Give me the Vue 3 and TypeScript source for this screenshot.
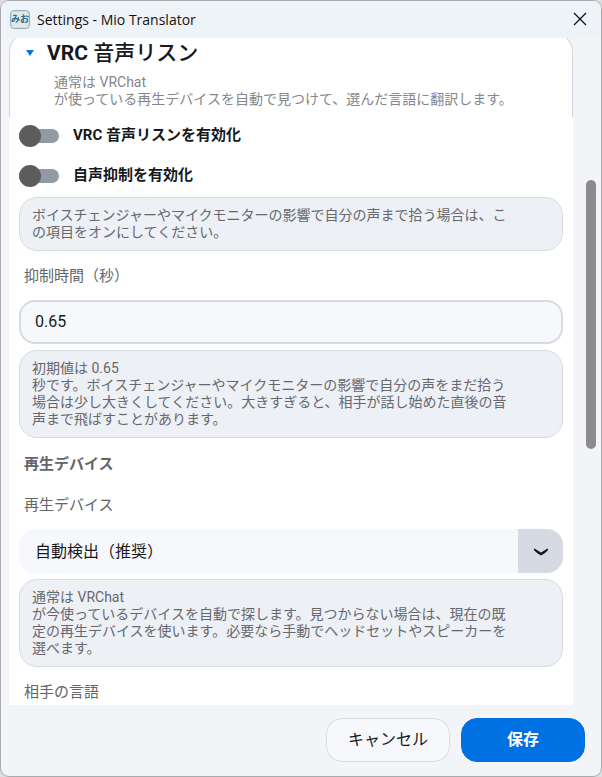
<script setup lang="ts">
import { ref } from 'vue'

const expanded = ref(true)
const listenEnabled = ref(false)
const suppressEnabled = ref(false)
const suppressSeconds = ref('0.65')
const device = ref('auto')

const devices = [{ value: 'auto', label: '自動検出（推奨）' }]

const thumb = { top: '21.3%', height: '40.3%' }

const listenDescription = [
  '通常は VRChat',
  'が使っている再生デバイスを自動で見つけて、選んだ言語に翻訳します。',
]
const suppressNote = [
  'ボイスチェンジャーやマイクモニターの影響で自分の声まで拾う場合は、こ',
  'の項目をオンにしてください。',
]
const secondsNote = [
  '初期値は 0.65',
  '秒です。ボイスチェンジャーやマイクモニターの影響で自分の声をまだ拾う',
  '場合は少し大きくしてください。大きすぎると、相手が話し始めた直後の音',
  '声まで飛ばすことがあります。',
]
const deviceNote = [
  '通常は VRChat',
  'が今使っているデバイスを自動で探します。見つからない場合は、現在の既',
  '定の再生デバイスを使います。必要なら手動でヘッドセットやスピーカーを',
  '選べます。',
]
</script>

<template>
  <div class="window">
    <header class="titlebar">
      <span class="app-icon">みお</span>
      <h1 class="window-title">Settings - Mio Translator</h1>
      <button class="close" type="button" aria-label="Close">
        <svg width="14" height="14" viewBox="0 0 14 14" aria-hidden="true">
          <path d="M1 1L13 13M13 1L1 13" stroke="#111" stroke-width="1.3" fill="none" />
        </svg>
      </button>
    </header>

    <div class="body">
      <main class="panel">
        <section class="card">
          <h2 class="card-title">
            <button class="disclosure" type="button" :aria-expanded="expanded" @click="expanded = !expanded">
              <svg width="8" height="6" viewBox="0 0 8 6" aria-hidden="true">
                <path d="M0 0H8L4 6Z" fill="#0b72dc" />
              </svg>
              <span>VRC <span class="title-ja">音声リスン</span></span>
            </button>
          </h2>
          <p class="description">
            <span v-for="line in listenDescription" :key="line" class="line">{{ line }}</span>
          </p>
        </section>

        <div v-show="expanded" class="fields">
          <div class="switches">
            <label class="switch">
              <input v-model="listenEnabled" type="checkbox" role="switch" />
              <span>VRC 音声リスンを有効化</span>
            </label>
            <label class="switch">
              <input v-model="suppressEnabled" type="checkbox" role="switch" />
              <span>自声抑制を有効化</span>
            </label>
          </div>
          <p class="note">
            <span v-for="line in suppressNote" :key="line" class="line">{{ line }}</span>
          </p>

          <label class="label" for="seconds">抑制時間（秒）</label>
          <input id="seconds" v-model="suppressSeconds" class="entry" type="text" inputmode="decimal" />
          <p class="note">
            <span v-for="line in secondsNote" :key="line" class="line">{{ line }}</span>
          </p>

          <h3 class="heading">再生デバイス</h3>
          <label class="label" for="device">再生デバイス</label>
          <div class="combo">
            <select id="device" v-model="device">
              <option v-for="d in devices" :key="d.value" :value="d.value">{{ d.label }}</option>
            </select>
            <span class="combo-arrow">
              <svg width="16" height="8" viewBox="0 0 16 8" aria-hidden="true">
                <path d="M1 0.800Q2.400 0.400 3.400 1.700L8 4.400L12.600 1.700Q13.600 0.400 15 0.800Q15.600 1.800 14.400 2.800L11.400 5.400Q9.600 6.100 8 7.600Q6.400 6.100 4.600 5.400L1.600 2.800Q0.400 1.800 1 0.800Z" fill="#17191d" />
              </svg>
            </span>
          </div>
          <p class="note">
            <span v-for="line in deviceNote" :key="line" class="line">{{ line }}</span>
          </p>

          <h3 class="label last">相手の言語</h3>
        </div>
      </main>
      <div class="track">
        <div class="thumb" :style="thumb"></div>
      </div>
    </div>

    <footer class="actions">
      <button class="button" type="button">キャンセル</button>
      <button class="button primary" type="button">保存</button>
    </footer>
  </div>
</template>

<style>
body {
  background: #dcdde0;
}
</style>

<style scoped>
.window,
.window * {
  box-sizing: border-box;
}

.window {
  display: flex;
  flex-direction: column;
  min-height: 100vh;
  overflow: hidden;
  border: 1px solid #a9abae;
  border-radius: 9px;
  background: #f3f4f7;
  color: #16181c;
  font-family: Roboto, "Noto Sans CJK JP", sans-serif;
}

button,
input,
select {
  font: inherit;
  color: inherit;
}

h1,
h2,
h3,
p {
  margin: 0;
}

.titlebar {
  display: flex;
  align-items: center;
  height: 37px;
  padding: 0 7px 0 9px;
  background: #eef3f8;
}

.app-icon {
  display: flex;
  justify-content: center;
  width: 20px;
  height: 19px;
  border: 1px solid #93b2c9;
  border-radius: 4px;
  background: #e9e8df;
  box-shadow: inset 0 0 0 1px #cddde8;
  color: #23699a;
  font-size: 9px;
  font-weight: 700;
  line-height: 16px;
  white-space: nowrap;
}

.window-title {
  flex: 1;
  margin-left: 7px;
  color: #111;
  font: 400 14px/20px "Open Sans", "Noto Sans", sans-serif;
}

.close {
  display: grid;
  place-items: center;
  width: 28px;
  height: 28px;
  padding: 0 0 2px;
  border: 0;
  background: none;
}

.body {
  display: flex;
  flex: 1;
  overflow: hidden;
}

.panel {
  flex: 1;
  min-width: 0;
  margin-left: 8px;
  background: linear-gradient(#f3f4f7 20px, #fff 20px);
}

.card {
  margin-top: -6px;
  padding: 8px 16px 9px;
  border: 1px solid #d3d7dd;
  border-bottom: 0;
  border-radius: 20px 20px 0 0;
  background: #fff;
}

.card-title {
  font-size: 21px;
  font-weight: 700;
  line-height: 24px;
}

.disclosure {
  display: flex;
  align-items: center;
  gap: 13px;
  padding: 0;
  border: 0;
  background: none;
}

.title-ja {
  font-weight: 500;
}

.description {
  margin: 9px 0 0 28px;
  color: #85878b;
  font-size: 14px;
  line-height: 17px;
}

.line {
  display: block;
}

.fields {
  display: flex;
  flex-direction: column;
  padding: 8px 10px 0;
  background: #fff;
}

.switches {
  display: flex;
  flex-direction: column;
  gap: 18px;
  margin-bottom: 10px;
}

.switch {
  display: flex;
  align-items: flex-start;
  gap: 14px;
  height: 22px;
  font-size: 15px;
  font-weight: 700;
  line-height: 20px;
}

.switch input {
  position: relative;
  width: 40px;
  height: 22px;
  margin: 0;
  appearance: none;
}

.switch input::before {
  content: "";
  position: absolute;
  inset: 4px 0;
  border-radius: 7px;
  background: #929ba3;
}

.switch input::after {
  content: "";
  position: absolute;
  top: 0;
  left: 0;
  width: 22px;
  height: 22px;
  border-radius: 50%;
  background: #5c5c5c;
}

.switch input:checked::before {
  background: #0071e3;
}

.switch input:checked::after {
  left: 18px;
}

.note {
  padding: 9px 12px;
  border: 1px solid #d6dae2;
  border-radius: 18px;
  background: #edf0f5;
  color: #66686d;
  font-size: 14px;
  line-height: 17px;
}

.label,
.heading {
  padding-left: 5px;
  color: #636569;
  font-size: 15px;
  line-height: 20px;
}

.label {
  margin: 15px 0 14px;
  font-weight: 400;
}

.heading {
  margin: 16px 0 6px;
  font-weight: 700;
}

.last {
  margin-bottom: 3px;
}

.entry {
  width: 100%;
  height: 44px;
  margin-bottom: 6px;
  padding: 0 14px 2px;
  border: 2px solid #d6dae4;
  border-radius: 16px;
  background: #f7f8fc;
  font-size: 16px;
}

.combo {
  position: relative;
  height: 44px;
  margin-bottom: 6px;
  overflow: hidden;
  border-radius: 16px;
}

.combo select {
  width: 100%;
  height: 100%;
  padding: 0 60px 0 16px;
  border: 0;
  background: #f7f8fc;
  font-size: 16px;
  appearance: none;
}

.combo-arrow {
  position: absolute;
  inset: 0 0 0 auto;
  display: grid;
  place-items: center;
  width: 45px;
  padding-top: 2px;
  background: #d6dae3;
  pointer-events: none;
}

.track {
  position: relative;
  width: 28px;
}

.thumb {
  position: absolute;
  left: 13px;
  width: 10px;
  border-radius: 5px;
  background: #8b8b8b;
}

.actions {
  display: flex;
  justify-content: flex-end;
  gap: 11px;
  padding: 13px 16px 14px;
}

.button {
  width: 124px;
  height: 44px;
  padding: 0 0 4px;
  border: 1px solid #d6dae2;
  border-radius: 16px;
  background: #f7f8fc;
  font-size: 16px;
}

.primary {
  border-color: #0071e3;
  background: #0071e3;
  color: #fff;
  font-weight: 700;
}
</style>
